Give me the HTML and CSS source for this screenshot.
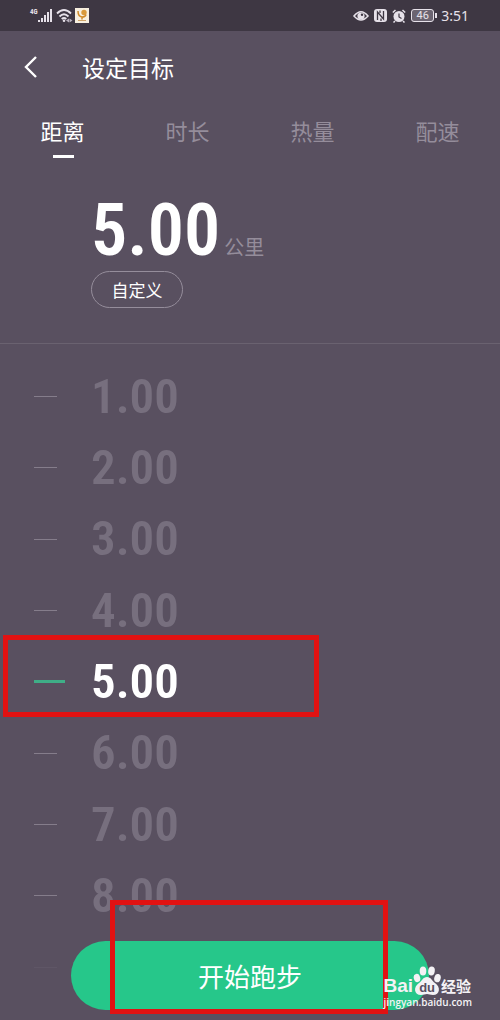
FILE: index.html
```
<!DOCTYPE html>
<html lang="zh-CN">
<head>
    <meta charset="UTF-8">
    <meta name="viewport" content="width=device-width, initial-scale=1.0">
    <title>设定目标</title>
    <link rel="stylesheet" href="styles.css">
</head>
<body>
    <!-- 状态栏 -->
    <div class="status-bar">
        <div class="status-left">
            <span class="network">4G</span>
            <svg class="signal" width="14" height="15" viewBox="0 0 14 15">
                <path fill="#e6e1e9" d="M0 12h2v2H0zM3 10h2v4H3zM6 7h2v7H6zM9 4h2v10H9zM12 1h2v13h-2z"/>
            </svg>
            <svg width="17" height="15" viewBox="0 0 17 15">
                <g fill="none" stroke="#e6e1e9" stroke-width="1.8">
                    <path d="M1 5.500Q8 -1.500 15 5.500"/>
                    <path d="M3.500 8.500Q8 4 12.500 8.500"/>
                    <path d="M5.700 11Q8 9 10.300 11"/>
                </g>
                <circle cx="8" cy="12.800" r="1.300" fill="#e6e1e9"/>
                <path d="M10 12.500l3-2v4zM16.500 12.500l-3-2v4z" fill="#b9b2be"/>
            </svg>
            <svg width="14" height="15" viewBox="0 0 14 15">
                <rect width="14" height="15" fill="#f7efdf"/>
                <circle cx="9" cy="4.500" r="2.700" fill="#d99a3c"/>
                <path d="M3 3Q3 8.500 7 9Q10.500 9 11 6.500M7 9v2.500" fill="none" stroke="#d08a28" stroke-width="1.500"/>
                <path d="M3 12.500h8" stroke="#cfa366" stroke-width="1"/>
            </svg>
        </div>
        <div class="status-right">
            <svg width="16" height="12" viewBox="0 0 16 12">
                <path d="M1 6Q8 -2.500 15 6Q8 14 1 6z" fill="none" stroke="#e6e1e9" stroke-width="1.600"/>
                <circle cx="8" cy="6" r="3.600" fill="#e6e1e9"/>
                <circle cx="9" cy="4.800" r="1.200" fill="#3e3743"/>
            </svg>
            <svg width="13" height="13" viewBox="0 0 13 13">
                <rect width="13" height="13" rx="3" fill="#e6e1e9"/>
                <path d="M3.500 11V3L9.500 10V2M6 1.500V4M7 9.500V12" fill="none" stroke="#3e3743" stroke-width="1.300"/>
            </svg>
            <svg width="14" height="14" viewBox="0 0 14 14">
                <circle cx="7" cy="7.500" r="5.500" fill="#e6e1e9"/>
                <path d="M0.800 3.500L3.500 1M13.200 3.500L10.500 1M3 12l-1.500 1.500M11 12l1.500 1.500" stroke="#e6e1e9" stroke-width="1.500"/>
                <path d="M7 4.500V8l2.500 1.500" fill="none" stroke="#3e3743" stroke-width="1.200"/>
            </svg>
            <div class="battery">46</div>
            <span class="clock">3:51</span>
        </div>
    </div>

    <header class="page-header">
        <button class="back-button" aria-label="返回">
            <svg width="14" height="24" viewBox="0 0 14 24">
                <path d="M12 2L2 12L12 22" fill="none" stroke="#ffffff" stroke-width="2.400"/>
            </svg>
        </button>
        <h1 class="page-title">设定目标</h1>
    </header>

    <nav class="tabs">
        <button class="tab active">距离</button>
        <button class="tab">时长</button>
        <button class="tab">热量</button>
        <button class="tab">配速</button>
    </nav>

    <!-- 当前目标 -->
    <section class="goal">
        <div class="goal-value">
            <span class="goal-number">5.00</span>
            <span class="goal-unit">公里</span>
        </div>
        <button class="custom-button">自定义</button>
    </section>

    <!-- 距离列表 -->
    <main class="distance-list">
        <label class="distance"><input type="radio" name="distance"><span>1.00</span></label>
        <label class="distance"><input type="radio" name="distance"><span>2.00</span></label>
        <label class="distance"><input type="radio" name="distance"><span>3.00</span></label>
        <label class="distance"><input type="radio" name="distance"><span>4.00</span></label>
        <label class="distance"><input type="radio" name="distance" checked><span>5.00</span></label>
        <label class="distance"><input type="radio" name="distance"><span>6.00</span></label>
        <label class="distance"><input type="radio" name="distance"><span>7.00</span></label>
        <label class="distance"><input type="radio" name="distance"><span>8.00</span></label>
        <div class="distance next"></div>
    </main>

    <button class="start-button">开始跑步</button>

    <!-- 标注框 -->
    <div class="mark mark-distance"></div>
    <div class="mark mark-start"></div>

    <!-- 水印 -->
    <div class="watermark">
        <div class="watermark-brand">
            <span class="brand-bai">Bai</span>
            <span class="brand-paw">
                <svg width="28" height="30" viewBox="0 0 28 30">
                    <g fill="#f4f2f5">
                        <ellipse cx="4" cy="12" rx="3.200" ry="4.200" transform="rotate(-15 4 12)"/>
                        <ellipse cx="10" cy="5" rx="3.300" ry="4.500"/>
                        <ellipse cx="18.500" cy="5" rx="3.300" ry="4.500" transform="rotate(8 18 5)"/>
                        <ellipse cx="24.500" cy="12" rx="3.200" ry="4.200" transform="rotate(15 24 12)"/>
                        <path d="M14 11C18 11 19 15 22 17C28 21 27 29 20 29C17 29 16 28 14 28S11 29 8 29C1 29 0 21 6 17C9 15 10 11 14 11z"/>
                    </g>
                </svg>
                <span class="brand-du">du</span>
            </span>
            <span class="brand-name">经验</span>
        </div>
        <div class="watermark-url">jingyan.baidu.com</div>
    </div>
</body>
</html>
```

FILE: styles.css
```
* {
    box-sizing: border-box;
}

body {
    position: relative;
    display: flex;
    flex-direction: column;
    min-height: 100vh;
    margin: 0;
    background-color: #595060;
    color: #ffffff;
    font-family: "Noto Sans CJK SC", sans-serif;
}

button {
    padding: 0;
    border: none;
    background: none;
    color: inherit;
    font-family: inherit;
    cursor: pointer;
}

/* 状态栏 */
.status-bar {
    display: flex;
    justify-content: space-between;
    align-items: center;
    height: 31px;
    padding: 0 31px 0 30px;
    background-color: #3e3743;
    color: #e6e1e9;
}

.status-left {
    display: flex;
    align-items: center;
    gap: 2px;
}

.network {
    align-self: flex-start;
    width: 6px;
    font: bold 7px/8px "Roboto Condensed", sans-serif;
}

.signal {
    margin-right: 2px;
}

.status-right {
    display: flex;
    align-items: center;
    gap: 5px;
}

.battery {
    position: relative;
    width: 23px;
    height: 13px;
    border: 1px solid #e6e1e9;
    border-radius: 3px;
    background-color: #6b6471;
    font: 11px/11px Roboto, sans-serif;
    text-align: center;
}

.battery::after {
    content: "";
    position: absolute;
    top: 3px;
    right: -4px;
    width: 2px;
    height: 5px;
    background-color: #e6e1e9;
}

.clock {
    margin-left: 2px;
    font: 14px/20px "Noto Sans", sans-serif;
}

/* 标题 */
.page-header {
    display: flex;
    align-items: center;
    gap: 44px;
    height: 71px;
    padding: 0 24px;
}

.back-button {
    display: flex;
}

.page-title {
    margin: 0;
    font-size: 23px;
    font-weight: 400;
    line-height: 32px;
}

.tabs {
    display: grid;
    grid-template-columns: repeat(4, 1fr);
}

.tab {
    position: relative;
    height: 56px;
    color: #958d9b;
    font-size: 22px;
    line-height: 56px;
}

.tab.active {
    color: #ffffff;
}

.tab.active::after {
    content: "";
    position: absolute;
    bottom: 0;
    left: calc(50% - 10px);
    width: 21px;
    height: 3px;
    background-color: #ffffff;
}

/* 当前目标 */
.goal {
    padding: 33px 91px 35px;
    border-bottom: 1px solid #6a6270;
}

.goal-value {
    display: flex;
    align-items: baseline;
    gap: 4px;
    height: 80px;
}

.goal-number {
    font: 600 72px/80px "Roboto Condensed", sans-serif;
}

.goal-unit {
    color: #958d9b;
    font-size: 20px;
    line-height: 28px;
}

.custom-button {
    display: block;
    width: 92px;
    height: 37px;
    border: 1px solid #958d9b;
    border-radius: 19px;
    font-size: 17px;
}

/* 距离列表 */
.distance-list {
    flex: 1;
    display: grid;
    grid-auto-rows: 1fr;
    padding: 17px 34px;
}

.distance {
    display: grid;
    grid-template-columns: 57px 1fr;
    align-items: center;
    color: #776f7e;
    font: 600 49px/60px "Roboto Condensed", sans-serif;
    cursor: pointer;
}

.distance input {
    appearance: none;
    width: 23px;
    height: 1px;
    margin: 0;
    background-color: #857d8b;
}

.distance input:checked {
    width: 31px;
    height: 3px;
    background-color: #3fae87;
}

.distance input:checked + span {
    color: #ffffff;
}

.distance.next::before {
    content: "";
    width: 23px;
    height: 1px;
    background-color: #5f5666;
}

.start-button {
    position: absolute;
    right: 71px;
    bottom: 10px;
    left: 71px;
    height: 69px;
    border-radius: 35px;
    background-color: #26c78a;
    font-size: 26px;
}

/* 标注框 */
.mark {
    position: absolute;
    border: 5px solid #e11212;
    pointer-events: none;
}

.mark-distance {
    top: 635px;
    left: 3px;
    width: 316px;
    height: 82px;
}

.mark-start {
    top: 900px;
    left: 110px;
    width: 278px;
    height: 114px;
}

/* 水印 */
.watermark {
    position: absolute;
    right: 28px;
    bottom: 12px;
    color: #f4f2f5;
}

.watermark-brand {
    display: flex;
    align-items: flex-end;
}

.brand-bai {
    font: bold 19px/20px "Liberation Sans", sans-serif;
}

.brand-paw {
    position: relative;
    display: flex;
}

.brand-du {
    position: absolute;
    right: 0;
    bottom: 2px;
    left: 0;
    color: #595060;
    font: bold 13px/13px "Liberation Sans", sans-serif;
    text-align: center;
}

.brand-name {
    font-size: 15px;
    font-weight: 700;
    line-height: 20px;
}

.watermark-url {
    font: 600 10px/12px "Open Sans", sans-serif;
}
```
